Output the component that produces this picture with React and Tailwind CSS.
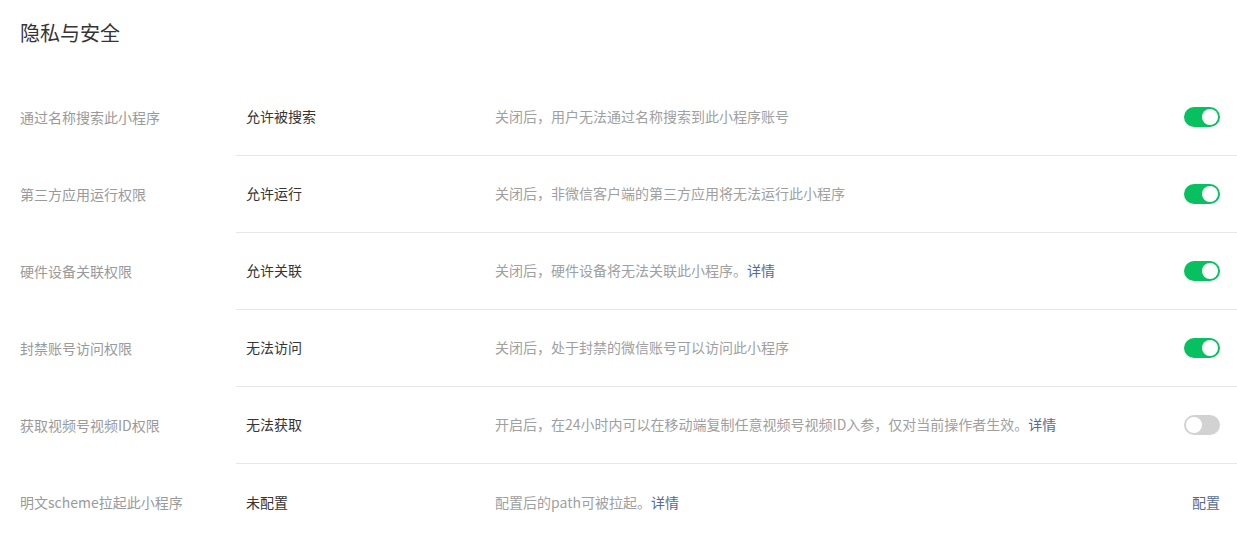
import React from "react";

const rows = [
  { label: "通过名称搜索此小程序", value: "允许被搜索", desc: "关闭后，用户无法通过名称搜索到此小程序账号", on: true },
  { label: "第三方应用运行权限", value: "允许运行", desc: "关闭后，非微信客户端的第三方应用将无法运行此小程序", on: true },
  { label: "硬件设备关联权限", value: "允许关联", desc: "关闭后，硬件设备将无法关联此小程序。", link: "详情", on: true },
  { label: "封禁账号访问权限", value: "无法访问", desc: "关闭后，处于封禁的微信账号可以访问此小程序", on: true },
  { label: "获取视频号视频ID权限", value: "无法获取", desc: "开启后，在24小时内可以在移动端复制任意视频号视频ID入参，仅对当前操作者生效。", link: "详情", on: false },
  { label: "明文scheme拉起此小程序", value: "未配置", desc: "配置后的path可被拉起。", link: "详情", action: "配置", last: true },
];

function Toggle({ on }) {
  return (
    <div
      className={
        "w-[36px] h-[20px] rounded-full flex items-center px-[2px] " +
        (on ? "bg-[#07c160] justify-end" : "bg-[#d2d2d2] justify-start")
      }
    >
      <div className="w-[16px] h-[16px] rounded-full bg-white" />
    </div>
  );
}

export default function App() {
  return (
    <div
      className="w-[1237px] h-[540px] bg-white overflow-hidden"
      style={{ fontFamily: '"Noto Sans CJK SC", "Noto Sans", sans-serif' }}
    >
      <div className="pl-[20px] pt-[19px] h-[79px] text-[20px] leading-[28px] text-[#353535]">
        隐私与安全
      </div>
      {rows.map((r, i) => (
        <div key={i} className="flex h-[77px]">
          <div className="w-[236px] pl-[20px] flex items-center text-[14px] text-[#9a9a9a] pb-[1px]">
            {r.label}
          </div>
          <div
            className={
              "flex-1 flex items-center text-[14px] pb-[1px] " +
              (r.last ? "" : "border-b border-[#e7e7e7]")
            }
          >
            <div className="w-[259px] pl-[10px] text-[#353535]">{r.value}</div>
            <div className="flex-1 text-[14px] text-[#a0a0a0]">
              {r.desc}
              {r.link && <span className="text-[#576b95]">{r.link}</span>}
            </div>
            <div className="pr-[17px] flex justify-end">
              {r.action ? (
                <span className="text-[14px] text-[#576b95]">{r.action}</span>
              ) : (
                <Toggle on={r.on} />
              )}
            </div>
          </div>
        </div>
      ))}
    </div>
  );
}
